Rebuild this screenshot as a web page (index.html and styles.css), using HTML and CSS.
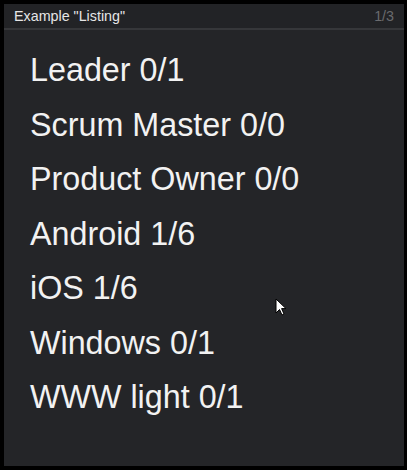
FILE: index.html
```html
<!DOCTYPE html>
<html>
<head>
<meta charset="utf-8">
<link rel="stylesheet" href="styles.css">
</head>
<body>
<div class="panel">
  <div class="header">
    <span class="title">Example "Listing"</span>
    <span class="page">1/3</span>
  </div>
  <ul class="list">
    <li>Leader 0/1</li>
    <li>Scrum Master 0/0</li>
    <li>Product Owner 0/0</li>
    <li>Android 1/6</li>
    <li>iOS 1/6</li>
    <li>Windows 0/1</li>
    <li>WWW light 0/1</li>
  </ul>
  <svg class="cursor" width="12" height="19" viewBox="0 0 12 19">
    <path d="M1 1 L1 15 L4.5 11.5 L7 17 L9 16 L6.6 10.6 L11 10.6 Z" fill="#fff" stroke="#000" stroke-width="1"/>
  </svg>
</div>
</body>
</html>
```
FILE: styles.css
```css
html, body {
  margin: 0;
  padding: 0;
  background: #000;
}
body {
  padding: 4px 3px 4px 4px;
  font-family: "Liberation Sans", Arial, sans-serif;
}
.panel {
  position: relative;
  height: 462px;
  background: #242528;
  display: flex;
  flex-direction: column;
}
.header {
  height: 24px;
  background: #222326;
  border-bottom: 2px solid #36373a;
  display: flex;
  align-items: center;
  justify-content: space-between;
  padding: 0 10px 0 10px;
  font-size: 14.3px;
}
.title {
  color: #e6e6e6;
}
.page {
  color: #6a6b6e;
}
.list {
  list-style: none;
  margin: 0;
  padding: 13px 0 0 26px;
}
.list li {
  color: #f2f2f2;
  font-size: 32.3px;
  line-height: 54.5px;
}
.cursor {
  position: absolute;
  left: 271px;
  top: 294px;
}
```
